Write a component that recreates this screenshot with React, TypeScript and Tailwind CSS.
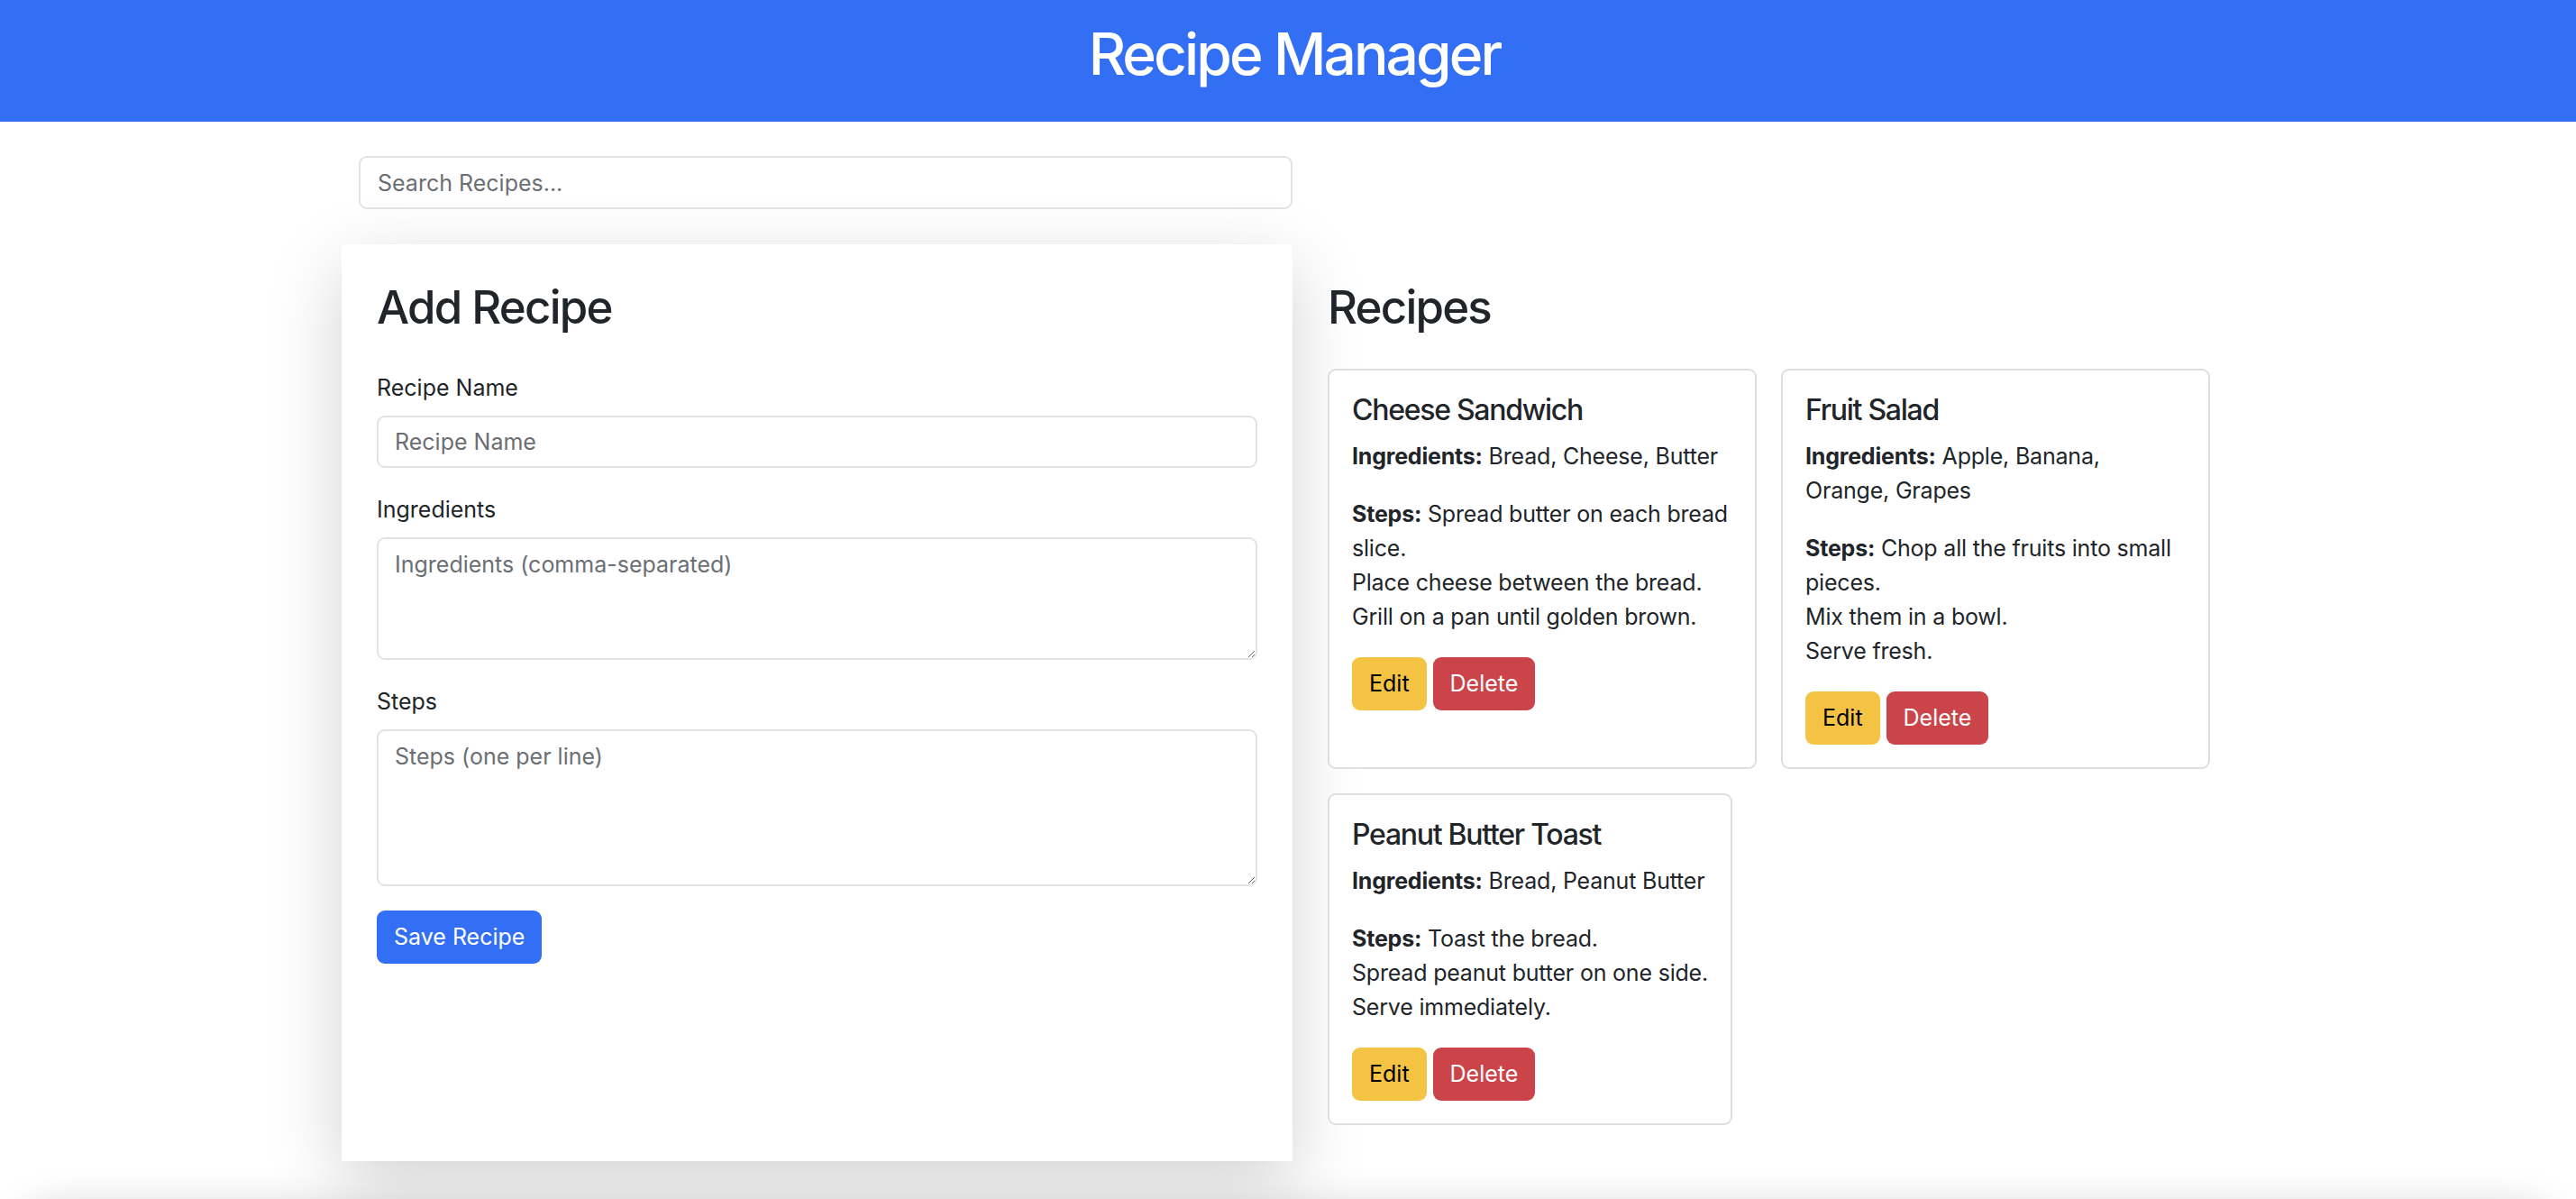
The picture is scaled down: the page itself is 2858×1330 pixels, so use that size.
import { Fragment, useState } from "react";

type Recipe = {
  id: number;
  name: string;
  ingredients: string[];
  steps: string[];
};

const initialRecipes: Recipe[] = [
  {
    id: 1,
    name: "Cheese Sandwich",
    ingredients: ["Bread", "Cheese", "Butter"],
    steps: [
      "Spread butter on each bread slice.",
      "Place cheese between the bread.",
      "Grill on a pan until golden brown.",
    ],
  },
  {
    id: 2,
    name: "Fruit Salad",
    ingredients: ["Apple", "Banana", "Orange", "Grapes"],
    steps: ["Chop all the fruits into small pieces.", "Mix them in a bowl.", "Serve fresh."],
  },
  {
    id: 3,
    name: "Peanut Butter Toast",
    ingredients: ["Bread", "Peanut Butter"],
    steps: ["Toast the bread.", "Spread peanut butter on one side.", "Serve immediately."],
  },
];

const inputClass =
  "w-full rounded-[9px] border-2 border-[#e3e3e3] bg-white px-[18px] text-[25px] leading-[38px] text-[#212529] placeholder:text-[#6b6f74] outline-none";

const RecipeCard = ({ recipe, onDelete }: { recipe: Recipe; onDelete: () => void }) => (
  <div className="max-w-[476px] rounded-[9px] border-2 border-[#dedede] bg-white p-[25px]">
    <h5 className="mb-[13px] text-[32px] leading-[38px] font-medium tracking-[-0.04em]">
      {recipe.name}
    </h5>
    <p className="mb-[26px] text-[25px] leading-[38px] tracking-[-0.2px]">
      <strong className="font-bold">Ingredients:</strong> {recipe.ingredients.join(", ")}
    </p>
    <p className="mb-[26px] text-[25px] leading-[38px] tracking-[-0.2px]">
      <strong className="font-bold">Steps:</strong>{" "}
      {recipe.steps.map((step, i) => (
        <Fragment key={i}>
          {i > 0 && <br />}
          {step}
        </Fragment>
      ))}
    </p>
    <div className="flex gap-[7px]">
      <button className="h-[59px] rounded-[9px] bg-[#f5c344] px-[19px] text-[25px] text-black">
        Edit
      </button>
      <button
        onClick={onDelete}
        className="h-[59px] rounded-[9px] bg-[#cb444a] px-[19px] text-[25px] text-white"
      >
        Delete
      </button>
    </div>
  </div>
);

export default function App() {
  const [recipes, setRecipes] = useState(initialRecipes);
  const [search, setSearch] = useState("");
  const [name, setName] = useState("");
  const [ingredients, setIngredients] = useState("");
  const [steps, setSteps] = useState("");

  const saveRecipe = () => {
    if (!name.trim()) return;
    setRecipes([
      ...recipes,
      {
        id: Date.now(),
        name: name.trim(),
        ingredients: ingredients.split(",").map((s) => s.trim()).filter(Boolean),
        steps: steps.split("\n").map((s) => s.trim()).filter(Boolean),
      },
    ]);
    setName("");
    setIngredients("");
    setSteps("");
  };

  const visible = recipes.filter((r) => r.name.toLowerCase().includes(search.toLowerCase()));

  return (
    <div className="h-[1330px] overflow-hidden bg-white font-['Inter',sans-serif] text-[#212529]">
      {/* header */}
      <header className="h-[135px] bg-[#336ff5] pt-[21px] pl-[14px] text-center">
        <h1 className="text-[64px] leading-[77px] font-medium tracking-[-0.045em] text-white">
          Recipe Manager
        </h1>
      </header>

      <main className="ml-[379px] h-[1210px] w-[2110px]">
        {/* search */}
        <div className="pt-[38px] pl-[19px]">
          <input
            value={search}
            onChange={(e) => setSearch(e.target.value)}
            placeholder="Search Recipes..."
            className={`${inputClass} h-[59px] w-[1036px]! px-[19px]`}
          />
        </div>

        <div className="mt-[39px] flex items-start">
          {/* add recipe form */}
          <div className="h-[1017px] w-[1055px] bg-white p-[39px] shadow-[0_25px_76px_rgba(0,0,0,0.18)]">
            <h2 className="mb-[40px] text-[51px] leading-[61px] font-medium tracking-[-0.035em]">
              Add Recipe
            </h2>
            <div className="mb-[27px]">
              <label className="mb-[12px] block text-[25px] leading-[38px]">Recipe Name</label>
              <input
                value={name}
                onChange={(e) => setName(e.target.value)}
                placeholder="Recipe Name"
                className={`${inputClass} h-[58px]`}
              />
            </div>
            <div className="mb-[27px]">
              <label className="mb-[12px] block text-[25px] leading-[38px]">Ingredients</label>
              <textarea
                value={ingredients}
                onChange={(e) => setIngredients(e.target.value)}
                placeholder="Ingredients (comma-separated)"
                className={`${inputClass} block h-[136px] py-[9px]`}
              />
            </div>
            <div className="mb-[27px]">
              <label className="mb-[12px] block text-[25px] leading-[38px]">Steps</label>
              <textarea
                value={steps}
                onChange={(e) => setSteps(e.target.value)}
                placeholder="Steps (one per line)"
                className={`${inputClass} block h-[174px] py-[9px]`}
              />
            </div>
            <button
              onClick={saveRecipe}
              className="h-[59px] rounded-[9px] bg-[#336ff5] px-[19px] text-[25px] text-white"
            >
              Save Recipe
            </button>
          </div>

          {/* recipe list */}
          <div className="w-[1055px] pt-[39px] pl-[39px]">
            <h2 className="mb-[38px] text-[51px] leading-[61px] font-medium tracking-[-0.035em]">
              Recipes
            </h2>
            <div className="flex w-[980px] flex-wrap gap-[27px]">
              {visible.map((recipe) => (
                <RecipeCard
                  key={recipe.id}
                  recipe={recipe}
                  onDelete={() => setRecipes(recipes.filter((r) => r.id !== recipe.id))}
                />
              ))}
            </div>
          </div>
        </div>
      </main>

      {/* shadow of the panel below the fold */}
      <div className="mx-[24px] h-[200px] rounded-[40px] bg-white shadow-[0_0_50px_rgba(0,0,0,0.24)]" />
    </div>
  );
}
